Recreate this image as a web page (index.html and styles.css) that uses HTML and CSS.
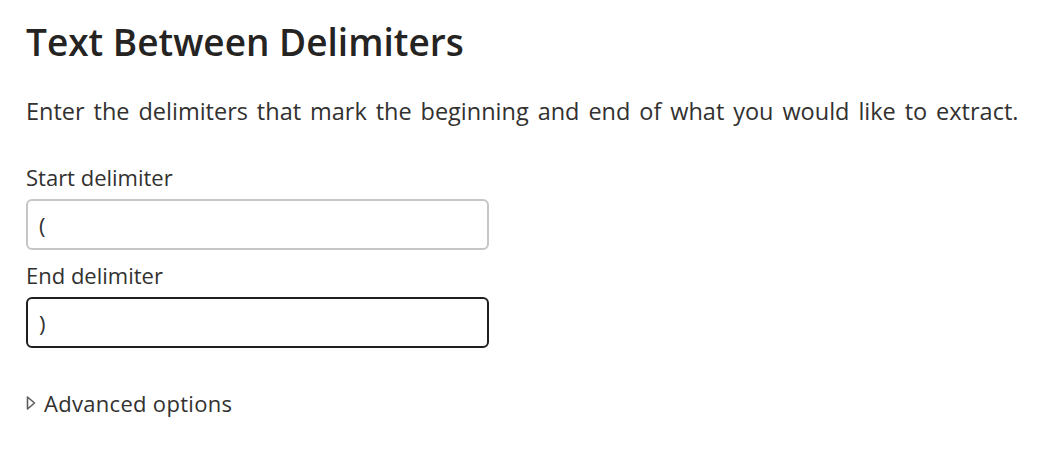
FILE: index.html
```html
<!DOCTYPE html>
<html lang="en">
<head>
  <meta charset="UTF-8" />
  <title>Text Between Delimiters</title>
  <link rel="stylesheet" href="styles.css">
</head>
<body>
  <div class="dialog">
    <h1>Text Between Delimiters</h1>
    <p class="intro">Enter the delimiters that mark the beginning and end of what you would like to extract.</p>

    <div class="field">
      <label for="startDelim">Start delimiter</label>
      <input type="text" id="startDelim" value="(" />
    </div>

    <div class="field">
      <label for="endDelim">End delimiter</label>
      <input type="text" id="endDelim" class="focused" value=")" />
    </div>

    <div class="advanced">
      <svg class="caret" width="10" height="16" viewBox="0 0 10 16">
        <path d="M1.5 2 L8.5 8 L1.5 14 Z" fill="none" stroke="#605e5c" stroke-width="1.6" stroke-linejoin="round"/>
      </svg>
      <span>Advanced options</span>
    </div>
  </div>
</body>
</html>
```

FILE: styles.css
```css
body {
  margin: 0;
  font-family: "Open Sans", "Noto Sans", sans-serif;
  background: #ffffff;
  color: #323130;
}

.dialog {
  padding: 16px 26px;
}

h1 {
  margin: 0;
  font-size: 37px;
  font-weight: 600;
  color: #252423;
  line-height: 52px;
}

.intro {
  margin: 28px 0 0;
  font-size: 23.5px;
  line-height: 30px;
  word-spacing: 2.8px;
}

.field {
  margin-top: 36px;
}

.field + .field {
  margin-top: 10px;
}

label {
  display: block;
  font-size: 22px;
  line-height: 30px;
  margin-bottom: 7px;
}

input[type="text"] {
  box-sizing: border-box;
  width: 463px;
  height: 51px;
  border: 2px solid #c8c6c4;
  border-radius: 6px;
  padding: 0 11px;
  font-family: inherit;
  font-size: 22px;
  color: #323130;
  outline: none;
  background: #fff;
}

input.focused {
  border-color: #201f1e;
}

.advanced {
  margin-top: 40px;
  display: flex;
  align-items: center;
  gap: 8px;
  font-size: 22px;
  line-height: 30px;
  letter-spacing: 0.3px;
}

.caret {
  flex: none;
}
```
